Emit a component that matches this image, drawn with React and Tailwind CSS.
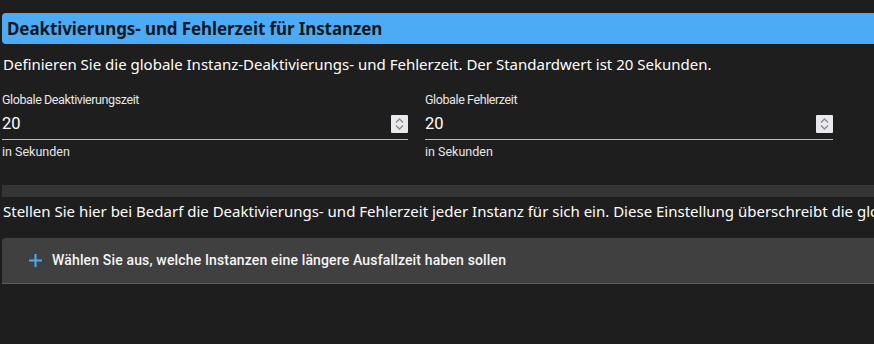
import React from "react";

function Spinner() {
  return (
    <div className="w-[17px] h-[18px] bg-[#e9e9ed] rounded-[1px] flex flex-col items-center justify-center gap-[2px]">
      <svg width="9" height="5" viewBox="0 0 9 5"><path d="M1 4.5 L4.5 1 L8 4.5" fill="none" stroke="#8a8a94" strokeWidth="1.3" /></svg>
      <svg width="9" height="5" viewBox="0 0 9 5"><path d="M1 0.5 L4.5 4 L8 0.5" fill="none" stroke="#8a8a94" strokeWidth="1.3" /></svg>
    </div>
  );
}

function Field({ label, width }) {
  return (
    <div className={width} style={{ fontFamily: "Roboto, sans-serif" }}>
      <div className="text-[12.5px] leading-[20px] text-[#e6e6e6] tracking-[-0.4px]">{label}</div>
      <div className="flex items-center justify-between pt-[4px] pb-[6px] border-b border-[#bdbdbd]">
        <span className="text-[16.5px] leading-[19px] text-white">20</span>
        <Spinner />
      </div>
      <div className="mt-[4px] text-[12.5px] leading-[16px] text-[#e6e6e6]">in Sekunden</div>
    </div>
  );
}

export default function App() {
  const seg = { fontFamily: '"Noto Sans", "Open Sans", sans-serif' };
  return (
    <div className="w-[874px] h-[344px] overflow-hidden bg-[#1e1e1e]">
      <div className="w-[1100px] pl-[2px] pt-[13px]">
        <div className="h-[31px] bg-[#4dabf5] rounded-[4px] flex items-center pl-[5px]" style={seg}>
          <span className="text-[17px] font-bold text-[#111a22] tracking-[-0.1px]">Deaktivierungs- und Fehlerzeit für Instanzen</span>
        </div>
        <div className="mt-[8px] text-[15px] leading-[24px] text-white pl-[1px]" style={seg}>
          Definieren Sie die globale Instanz-Deaktivierungs- und Fehlerzeit. Der Standardwert ist 20 Sekunden.
        </div>
        <div className="mt-[14px] flex gap-[17px]">
          <Field label="Globale Deaktivierungszeit" width="w-[406px]" />
          <Field label="Globale Fehlerzeit" width="w-[408px]" />
        </div>
        <div className="mt-[25px] h-[12px] bg-[#353535]" />
        <div className="mt-[2px] text-[15px] leading-[24px] text-white pl-[1px] whitespace-nowrap" style={seg}>
          Stellen Sie hier bei Bedarf die Deaktivierungs- und Fehlerzeit jeder Instanz für sich ein. Diese Einstellung überschreibt die globale Einstellung.
        </div>
        <div className="mt-[15px] h-[46px] bg-[#404040] rounded-t-[4px] border-b border-[#5c5c5c] flex items-center pl-[26px]">
          <svg width="15" height="15" viewBox="0 0 15 15" className="mr-[9px]">
            <path d="M7.5 1 V14 M1 7.5 H14" stroke="#4dabf5" strokeWidth="2" />
          </svg>
          <span className="text-[14px] font-medium text-[#f5f5f5] tracking-[0.15px]" style={{ fontFamily: "Roboto, sans-serif" }}>
            Wählen Sie aus, welche Instanzen eine längere Ausfallzeit haben sollen
          </span>
        </div>
      </div>
    </div>
  );
}
